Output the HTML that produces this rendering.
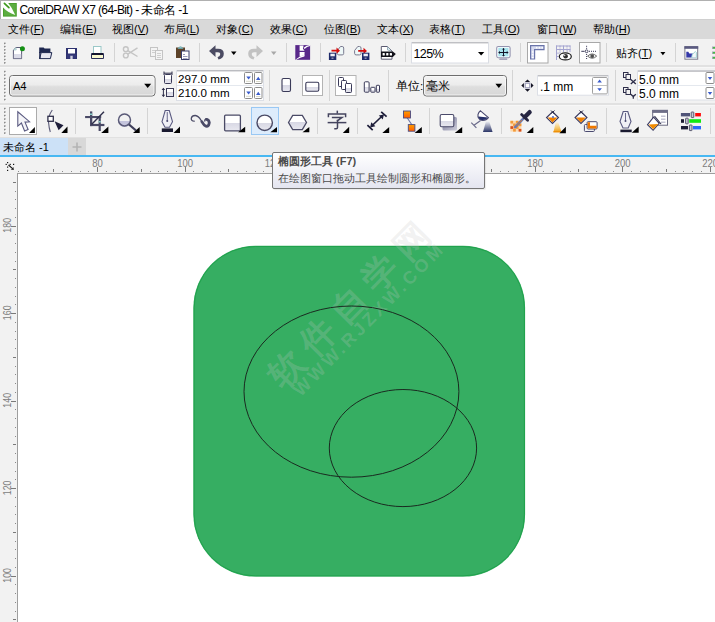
<!DOCTYPE html>
<html><head><meta charset="utf-8">
<style>
*{margin:0;padding:0;box-sizing:border-box}
html,body{width:715px;height:622px;overflow:hidden;background:#fff;font-family:"Liberation Sans",sans-serif;font-size:12px;color:#000}
.a{position:absolute}
.t{position:absolute;white-space:nowrap;font-size:11px;line-height:13px;color:#000}
.mi{top:23px}
</style></head><body>
<div class="a" style="left:0;top:0;width:715px;height:20px;background:#fff;border-top:1px solid #b0b0b0;border-left:1px solid #b0b0b0"></div>
<div class="a" style="left:0;top:19px;width:715px;height:20px;background:#d9d9d9;border-top:1px solid #d0d0d0"></div>
<div class="a" style="left:0;top:39px;width:715px;height:26px;background:#f2f2f2"></div>
<div class="a" style="left:0;top:65px;width:715px;height:2px;background:#e1e1e1"></div>
<div class="a" style="left:0;top:67px;width:715px;height:36px;background:#f2f2f2;border-top:1px solid #f7f7f7"></div>
<div class="a" style="left:0;top:103px;width:715px;height:2px;background:#e1e1e1"></div>
<div class="a" style="left:0;top:105px;width:715px;height:32px;background:#f2f2f2;border-top:1px solid #f7f7f7"></div>
<div class="a" style="left:0;top:137px;width:715px;height:18px;background:#ebebeb;border-top:1px solid #e1e1e1"></div>
<div class="a" style="left:0;top:138px;width:68px;height:17px;background:#cce1f7"></div>
<div class="a" style="left:68px;top:138px;width:18px;height:17px;background:#d8d8d8"></div>
<div class="a" style="left:0;top:155px;width:715px;height:2px;background:#48b8f2"></div>
<div class="a" style="left:0;top:157px;width:715px;height:16px;background:#f2f2f2"></div>
<div class="a" style="left:0;top:157px;width:17px;height:465px;background:#f2f2f2"></div>
<div class="a" style="left:17px;top:173px;width:698px;height:1px;background:#9e9e9e"></div>
<div class="a" style="left:17px;top:173px;width:1px;height:449px;background:#9e9e9e"></div>
<div class="a" style="left:18px;top:174px;width:697px;height:448px;background:#fff"></div>
<svg class="a" style="left:0;top:0" width="715" height="622" viewBox="0 0 715 622" font-family="Liberation Sans, sans-serif">
<rect x="193.4" y="245.8" width="331.7" height="330.8" rx="62" ry="62" fill="#36ae62"/>
<rect x="194.1" y="246.5" width="330.3" height="329.4" rx="61.3" ry="61.3" fill="none" stroke="#20a24c" stroke-width="1"/>
<g fill="#c8c8c8" fill-opacity="0.24" font-size="35" font-weight="bold">
<text x="0" y="0" transform="translate(286.0 369.0) rotate(-45.5)" text-anchor="middle" dominant-baseline="central">软</text>
<text x="0" y="0" transform="translate(317.2 337.0) rotate(-45.5)" text-anchor="middle" dominant-baseline="central">件</text>
<text x="0" y="0" transform="translate(348.5 305.0) rotate(-45.5)" text-anchor="middle" dominant-baseline="central">自</text>
<text x="0" y="0" transform="translate(379.8 273.0) rotate(-45.5)" text-anchor="middle" dominant-baseline="central">学</text>
<text x="0" y="0" transform="translate(411.0 241.0) rotate(-45.5)" text-anchor="middle" dominant-baseline="central">网</text>
</g>
<g fill="#c8c8c8" fill-opacity="0.24" font-size="18" font-weight="bold"><text x="0" y="0" transform="translate(367.9 320.4) rotate(-45.5)" text-anchor="middle" dominant-baseline="central" textLength="204" lengthAdjust="spacing">WWW.RJZXW.COM</text></g>
<ellipse cx="351.45" cy="391.6" rx="107.45" ry="85.6" fill="none" stroke="#1a2a20" stroke-width="1"/>
<ellipse cx="402.95" cy="448.05" rx="73.65" ry="58.55" fill="none" stroke="#1a2a20" stroke-width="1"/>
<line x1="18.5" y1="171" x2="18.5" y2="172" stroke="#8a8a8a" stroke-width="1"/>
<line x1="27.5" y1="171" x2="27.5" y2="172" stroke="#8a8a8a" stroke-width="1"/>
<line x1="36.5" y1="171" x2="36.5" y2="172" stroke="#8a8a8a" stroke-width="1"/>
<line x1="45.5" y1="171" x2="45.5" y2="172" stroke="#8a8a8a" stroke-width="1"/>
<line x1="53.5" y1="169" x2="53.5" y2="172" stroke="#7a7a7a" stroke-width="1"/>
<line x1="62.5" y1="171" x2="62.5" y2="172" stroke="#8a8a8a" stroke-width="1"/>
<line x1="71.5" y1="171" x2="71.5" y2="172" stroke="#8a8a8a" stroke-width="1"/>
<line x1="80.5" y1="171" x2="80.5" y2="172" stroke="#8a8a8a" stroke-width="1"/>
<line x1="88.5" y1="171" x2="88.5" y2="172" stroke="#8a8a8a" stroke-width="1"/>
<line x1="97.5" y1="167" x2="97.5" y2="172" stroke="#7a7a7a" stroke-width="1"/>
<text x="0" y="0" font-size="9.5" fill="#7c7c7c" text-anchor="middle" transform="translate(97.6 166.6) scale(1 1.13)">80</text>
<line x1="106.5" y1="171" x2="106.5" y2="172" stroke="#8a8a8a" stroke-width="1"/>
<line x1="115.5" y1="171" x2="115.5" y2="172" stroke="#8a8a8a" stroke-width="1"/>
<line x1="123.5" y1="171" x2="123.5" y2="172" stroke="#8a8a8a" stroke-width="1"/>
<line x1="132.5" y1="171" x2="132.5" y2="172" stroke="#8a8a8a" stroke-width="1"/>
<line x1="141.5" y1="169" x2="141.5" y2="172" stroke="#7a7a7a" stroke-width="1"/>
<line x1="150.5" y1="171" x2="150.5" y2="172" stroke="#8a8a8a" stroke-width="1"/>
<line x1="158.5" y1="171" x2="158.5" y2="172" stroke="#8a8a8a" stroke-width="1"/>
<line x1="167.5" y1="171" x2="167.5" y2="172" stroke="#8a8a8a" stroke-width="1"/>
<line x1="176.5" y1="171" x2="176.5" y2="172" stroke="#8a8a8a" stroke-width="1"/>
<line x1="185.5" y1="167" x2="185.5" y2="172" stroke="#7a7a7a" stroke-width="1"/>
<text x="0" y="0" font-size="9.5" fill="#7c7c7c" text-anchor="middle" transform="translate(185.1 166.6) scale(1 1.13)">100</text>
<line x1="193.5" y1="171" x2="193.5" y2="172" stroke="#8a8a8a" stroke-width="1"/>
<line x1="202.5" y1="171" x2="202.5" y2="172" stroke="#8a8a8a" stroke-width="1"/>
<line x1="211.5" y1="171" x2="211.5" y2="172" stroke="#8a8a8a" stroke-width="1"/>
<line x1="220.5" y1="171" x2="220.5" y2="172" stroke="#8a8a8a" stroke-width="1"/>
<line x1="228.5" y1="169" x2="228.5" y2="172" stroke="#7a7a7a" stroke-width="1"/>
<line x1="237.5" y1="171" x2="237.5" y2="172" stroke="#8a8a8a" stroke-width="1"/>
<line x1="246.5" y1="171" x2="246.5" y2="172" stroke="#8a8a8a" stroke-width="1"/>
<line x1="255.5" y1="171" x2="255.5" y2="172" stroke="#8a8a8a" stroke-width="1"/>
<line x1="263.5" y1="171" x2="263.5" y2="172" stroke="#8a8a8a" stroke-width="1"/>
<line x1="272.5" y1="167" x2="272.5" y2="172" stroke="#7a7a7a" stroke-width="1"/>
<text x="0" y="0" font-size="9.5" fill="#7c7c7c" text-anchor="middle" transform="translate(272.6 166.6) scale(1 1.13)">120</text>
<line x1="281.5" y1="171" x2="281.5" y2="172" stroke="#8a8a8a" stroke-width="1"/>
<line x1="290.5" y1="171" x2="290.5" y2="172" stroke="#8a8a8a" stroke-width="1"/>
<line x1="298.5" y1="171" x2="298.5" y2="172" stroke="#8a8a8a" stroke-width="1"/>
<line x1="307.5" y1="171" x2="307.5" y2="172" stroke="#8a8a8a" stroke-width="1"/>
<line x1="316.5" y1="169" x2="316.5" y2="172" stroke="#7a7a7a" stroke-width="1"/>
<line x1="325.5" y1="171" x2="325.5" y2="172" stroke="#8a8a8a" stroke-width="1"/>
<line x1="333.5" y1="171" x2="333.5" y2="172" stroke="#8a8a8a" stroke-width="1"/>
<line x1="342.5" y1="171" x2="342.5" y2="172" stroke="#8a8a8a" stroke-width="1"/>
<line x1="351.5" y1="171" x2="351.5" y2="172" stroke="#8a8a8a" stroke-width="1"/>
<line x1="360.5" y1="167" x2="360.5" y2="172" stroke="#7a7a7a" stroke-width="1"/>
<text x="0" y="0" font-size="9.5" fill="#7c7c7c" text-anchor="middle" transform="translate(360.2 166.6) scale(1 1.13)">140</text>
<line x1="368.5" y1="171" x2="368.5" y2="172" stroke="#8a8a8a" stroke-width="1"/>
<line x1="377.5" y1="171" x2="377.5" y2="172" stroke="#8a8a8a" stroke-width="1"/>
<line x1="386.5" y1="171" x2="386.5" y2="172" stroke="#8a8a8a" stroke-width="1"/>
<line x1="395.5" y1="171" x2="395.5" y2="172" stroke="#8a8a8a" stroke-width="1"/>
<line x1="403.5" y1="169" x2="403.5" y2="172" stroke="#7a7a7a" stroke-width="1"/>
<line x1="412.5" y1="171" x2="412.5" y2="172" stroke="#8a8a8a" stroke-width="1"/>
<line x1="421.5" y1="171" x2="421.5" y2="172" stroke="#8a8a8a" stroke-width="1"/>
<line x1="430.5" y1="171" x2="430.5" y2="172" stroke="#8a8a8a" stroke-width="1"/>
<line x1="438.5" y1="171" x2="438.5" y2="172" stroke="#8a8a8a" stroke-width="1"/>
<line x1="447.5" y1="167" x2="447.5" y2="172" stroke="#7a7a7a" stroke-width="1"/>
<text x="0" y="0" font-size="9.5" fill="#7c7c7c" text-anchor="middle" transform="translate(447.7 166.6) scale(1 1.13)">160</text>
<line x1="456.5" y1="171" x2="456.5" y2="172" stroke="#8a8a8a" stroke-width="1"/>
<line x1="465.5" y1="171" x2="465.5" y2="172" stroke="#8a8a8a" stroke-width="1"/>
<line x1="473.5" y1="171" x2="473.5" y2="172" stroke="#8a8a8a" stroke-width="1"/>
<line x1="482.5" y1="171" x2="482.5" y2="172" stroke="#8a8a8a" stroke-width="1"/>
<line x1="491.5" y1="169" x2="491.5" y2="172" stroke="#7a7a7a" stroke-width="1"/>
<line x1="500.5" y1="171" x2="500.5" y2="172" stroke="#8a8a8a" stroke-width="1"/>
<line x1="508.5" y1="171" x2="508.5" y2="172" stroke="#8a8a8a" stroke-width="1"/>
<line x1="517.5" y1="171" x2="517.5" y2="172" stroke="#8a8a8a" stroke-width="1"/>
<line x1="526.5" y1="171" x2="526.5" y2="172" stroke="#8a8a8a" stroke-width="1"/>
<line x1="535.5" y1="167" x2="535.5" y2="172" stroke="#7a7a7a" stroke-width="1"/>
<text x="0" y="0" font-size="9.5" fill="#7c7c7c" text-anchor="middle" transform="translate(535.2 166.6) scale(1 1.13)">180</text>
<line x1="543.5" y1="171" x2="543.5" y2="172" stroke="#8a8a8a" stroke-width="1"/>
<line x1="552.5" y1="171" x2="552.5" y2="172" stroke="#8a8a8a" stroke-width="1"/>
<line x1="561.5" y1="171" x2="561.5" y2="172" stroke="#8a8a8a" stroke-width="1"/>
<line x1="570.5" y1="171" x2="570.5" y2="172" stroke="#8a8a8a" stroke-width="1"/>
<line x1="578.5" y1="169" x2="578.5" y2="172" stroke="#7a7a7a" stroke-width="1"/>
<line x1="587.5" y1="171" x2="587.5" y2="172" stroke="#8a8a8a" stroke-width="1"/>
<line x1="596.5" y1="171" x2="596.5" y2="172" stroke="#8a8a8a" stroke-width="1"/>
<line x1="605.5" y1="171" x2="605.5" y2="172" stroke="#8a8a8a" stroke-width="1"/>
<line x1="613.5" y1="171" x2="613.5" y2="172" stroke="#8a8a8a" stroke-width="1"/>
<line x1="622.5" y1="167" x2="622.5" y2="172" stroke="#7a7a7a" stroke-width="1"/>
<text x="0" y="0" font-size="9.5" fill="#7c7c7c" text-anchor="middle" transform="translate(622.7 166.6) scale(1 1.13)">200</text>
<line x1="631.5" y1="171" x2="631.5" y2="172" stroke="#8a8a8a" stroke-width="1"/>
<line x1="640.5" y1="171" x2="640.5" y2="172" stroke="#8a8a8a" stroke-width="1"/>
<line x1="648.5" y1="171" x2="648.5" y2="172" stroke="#8a8a8a" stroke-width="1"/>
<line x1="657.5" y1="171" x2="657.5" y2="172" stroke="#8a8a8a" stroke-width="1"/>
<line x1="666.5" y1="169" x2="666.5" y2="172" stroke="#7a7a7a" stroke-width="1"/>
<line x1="675.5" y1="171" x2="675.5" y2="172" stroke="#8a8a8a" stroke-width="1"/>
<line x1="683.5" y1="171" x2="683.5" y2="172" stroke="#8a8a8a" stroke-width="1"/>
<line x1="692.5" y1="171" x2="692.5" y2="172" stroke="#8a8a8a" stroke-width="1"/>
<line x1="701.5" y1="171" x2="701.5" y2="172" stroke="#8a8a8a" stroke-width="1"/>
<line x1="710.5" y1="167" x2="710.5" y2="172" stroke="#7a7a7a" stroke-width="1"/>
<text x="0" y="0" font-size="9.5" fill="#7c7c7c" text-anchor="middle" transform="translate(710.2 166.6) scale(1 1.13)">220</text><line x1="13" y1="619.5" x2="16" y2="619.5" stroke="#7a7a7a" stroke-width="1"/>
<line x1="15" y1="611.5" x2="16" y2="611.5" stroke="#8a8a8a" stroke-width="1"/>
<line x1="15" y1="602.5" x2="16" y2="602.5" stroke="#8a8a8a" stroke-width="1"/>
<line x1="15" y1="593.5" x2="16" y2="593.5" stroke="#8a8a8a" stroke-width="1"/>
<line x1="15" y1="584.5" x2="16" y2="584.5" stroke="#8a8a8a" stroke-width="1"/>
<line x1="11" y1="576.5" x2="16" y2="576.5" stroke="#7a7a7a" stroke-width="1"/>
<text x="0" y="0" font-size="8.8" fill="#7c7c7c" text-anchor="middle" transform="translate(11.1 575.4) rotate(-90) scale(1 1.2)">100</text>
<line x1="15" y1="567.5" x2="16" y2="567.5" stroke="#8a8a8a" stroke-width="1"/>
<line x1="15" y1="558.5" x2="16" y2="558.5" stroke="#8a8a8a" stroke-width="1"/>
<line x1="15" y1="549.5" x2="16" y2="549.5" stroke="#8a8a8a" stroke-width="1"/>
<line x1="15" y1="541.5" x2="16" y2="541.5" stroke="#8a8a8a" stroke-width="1"/>
<line x1="13" y1="532.5" x2="16" y2="532.5" stroke="#7a7a7a" stroke-width="1"/>
<line x1="15" y1="523.5" x2="16" y2="523.5" stroke="#8a8a8a" stroke-width="1"/>
<line x1="15" y1="514.5" x2="16" y2="514.5" stroke="#8a8a8a" stroke-width="1"/>
<line x1="15" y1="506.5" x2="16" y2="506.5" stroke="#8a8a8a" stroke-width="1"/>
<line x1="15" y1="497.5" x2="16" y2="497.5" stroke="#8a8a8a" stroke-width="1"/>
<line x1="11" y1="488.5" x2="16" y2="488.5" stroke="#7a7a7a" stroke-width="1"/>
<text x="0" y="0" font-size="8.8" fill="#7c7c7c" text-anchor="middle" transform="translate(11.1 487.9) rotate(-90) scale(1 1.2)">120</text>
<line x1="15" y1="479.5" x2="16" y2="479.5" stroke="#8a8a8a" stroke-width="1"/>
<line x1="15" y1="471.5" x2="16" y2="471.5" stroke="#8a8a8a" stroke-width="1"/>
<line x1="15" y1="462.5" x2="16" y2="462.5" stroke="#8a8a8a" stroke-width="1"/>
<line x1="15" y1="453.5" x2="16" y2="453.5" stroke="#8a8a8a" stroke-width="1"/>
<line x1="13" y1="444.5" x2="16" y2="444.5" stroke="#7a7a7a" stroke-width="1"/>
<line x1="15" y1="436.5" x2="16" y2="436.5" stroke="#8a8a8a" stroke-width="1"/>
<line x1="15" y1="427.5" x2="16" y2="427.5" stroke="#8a8a8a" stroke-width="1"/>
<line x1="15" y1="418.5" x2="16" y2="418.5" stroke="#8a8a8a" stroke-width="1"/>
<line x1="15" y1="409.5" x2="16" y2="409.5" stroke="#8a8a8a" stroke-width="1"/>
<line x1="11" y1="401.5" x2="16" y2="401.5" stroke="#7a7a7a" stroke-width="1"/>
<text x="0" y="0" font-size="8.8" fill="#7c7c7c" text-anchor="middle" transform="translate(11.1 400.3) rotate(-90) scale(1 1.2)">140</text>
<line x1="15" y1="392.5" x2="16" y2="392.5" stroke="#8a8a8a" stroke-width="1"/>
<line x1="15" y1="383.5" x2="16" y2="383.5" stroke="#8a8a8a" stroke-width="1"/>
<line x1="15" y1="374.5" x2="16" y2="374.5" stroke="#8a8a8a" stroke-width="1"/>
<line x1="15" y1="366.5" x2="16" y2="366.5" stroke="#8a8a8a" stroke-width="1"/>
<line x1="13" y1="357.5" x2="16" y2="357.5" stroke="#7a7a7a" stroke-width="1"/>
<line x1="15" y1="348.5" x2="16" y2="348.5" stroke="#8a8a8a" stroke-width="1"/>
<line x1="15" y1="339.5" x2="16" y2="339.5" stroke="#8a8a8a" stroke-width="1"/>
<line x1="15" y1="331.5" x2="16" y2="331.5" stroke="#8a8a8a" stroke-width="1"/>
<line x1="15" y1="322.5" x2="16" y2="322.5" stroke="#8a8a8a" stroke-width="1"/>
<line x1="11" y1="313.5" x2="16" y2="313.5" stroke="#7a7a7a" stroke-width="1"/>
<text x="0" y="0" font-size="8.8" fill="#7c7c7c" text-anchor="middle" transform="translate(11.1 312.8) rotate(-90) scale(1 1.2)">160</text>
<line x1="15" y1="304.5" x2="16" y2="304.5" stroke="#8a8a8a" stroke-width="1"/>
<line x1="15" y1="296.5" x2="16" y2="296.5" stroke="#8a8a8a" stroke-width="1"/>
<line x1="15" y1="287.5" x2="16" y2="287.5" stroke="#8a8a8a" stroke-width="1"/>
<line x1="15" y1="278.5" x2="16" y2="278.5" stroke="#8a8a8a" stroke-width="1"/>
<line x1="13" y1="269.5" x2="16" y2="269.5" stroke="#7a7a7a" stroke-width="1"/>
<line x1="15" y1="261.5" x2="16" y2="261.5" stroke="#8a8a8a" stroke-width="1"/>
<line x1="15" y1="252.5" x2="16" y2="252.5" stroke="#8a8a8a" stroke-width="1"/>
<line x1="15" y1="243.5" x2="16" y2="243.5" stroke="#8a8a8a" stroke-width="1"/>
<line x1="15" y1="234.5" x2="16" y2="234.5" stroke="#8a8a8a" stroke-width="1"/>
<line x1="11" y1="226.5" x2="16" y2="226.5" stroke="#7a7a7a" stroke-width="1"/>
<text x="0" y="0" font-size="8.8" fill="#7c7c7c" text-anchor="middle" transform="translate(11.1 225.3) rotate(-90) scale(1 1.2)">180</text>
<line x1="15" y1="217.5" x2="16" y2="217.5" stroke="#8a8a8a" stroke-width="1"/>
<line x1="15" y1="208.5" x2="16" y2="208.5" stroke="#8a8a8a" stroke-width="1"/>
<line x1="15" y1="199.5" x2="16" y2="199.5" stroke="#8a8a8a" stroke-width="1"/>
<line x1="15" y1="191.5" x2="16" y2="191.5" stroke="#8a8a8a" stroke-width="1"/>
<line x1="13" y1="182.5" x2="16" y2="182.5" stroke="#7a7a7a" stroke-width="1"/><!-- title logo -->
<rect x="3" y="3" width="13.8" height="13.6" fill="#4aa02c"/>
<rect x="4" y="4" width="11.8" height="11.6" fill="#5cad40"/>
<path d="M2.8 2.8 H8 Q12 7.5 15.2 15 Q7.5 12.5 2.8 7.3 Z" fill="#ffffff"/>
<path d="M4.4 3.4 L8.9 7.6" stroke="#3e9a1e" stroke-width="1.7" stroke-linecap="round"/>
<!-- grips -->
<rect x="4" y="42.60" width="1.6" height="1.6" fill="#8a8a8a"/><rect x="5.3" y="43.90" width="1" height="1" fill="#ffffff"/>
<rect x="4" y="45.85" width="1.6" height="1.6" fill="#8a8a8a"/><rect x="5.3" y="47.15" width="1" height="1" fill="#ffffff"/>
<rect x="4" y="49.10" width="1.6" height="1.6" fill="#8a8a8a"/><rect x="5.3" y="50.40" width="1" height="1" fill="#ffffff"/>
<rect x="4" y="52.35" width="1.6" height="1.6" fill="#8a8a8a"/><rect x="5.3" y="53.65" width="1" height="1" fill="#ffffff"/>
<rect x="4" y="55.60" width="1.6" height="1.6" fill="#8a8a8a"/><rect x="5.3" y="56.90" width="1" height="1" fill="#ffffff"/>
<rect x="4" y="58.85" width="1.6" height="1.6" fill="#8a8a8a"/><rect x="5.3" y="60.15" width="1" height="1" fill="#ffffff"/>
<rect x="4" y="62.10" width="1.6" height="1.6" fill="#8a8a8a"/><rect x="5.3" y="63.40" width="1" height="1" fill="#ffffff"/>
<rect x="4" y="70.80" width="1.6" height="1.6" fill="#8a8a8a"/><rect x="5.3" y="72.10" width="1" height="1" fill="#ffffff"/>
<rect x="4" y="74.30" width="1.6" height="1.6" fill="#8a8a8a"/><rect x="5.3" y="75.60" width="1" height="1" fill="#ffffff"/>
<rect x="4" y="77.80" width="1.6" height="1.6" fill="#8a8a8a"/><rect x="5.3" y="79.10" width="1" height="1" fill="#ffffff"/>
<rect x="4" y="81.30" width="1.6" height="1.6" fill="#8a8a8a"/><rect x="5.3" y="82.60" width="1" height="1" fill="#ffffff"/>
<rect x="4" y="84.80" width="1.6" height="1.6" fill="#8a8a8a"/><rect x="5.3" y="86.10" width="1" height="1" fill="#ffffff"/>
<rect x="4" y="88.30" width="1.6" height="1.6" fill="#8a8a8a"/><rect x="5.3" y="89.60" width="1" height="1" fill="#ffffff"/>
<rect x="4" y="91.80" width="1.6" height="1.6" fill="#8a8a8a"/><rect x="5.3" y="93.10" width="1" height="1" fill="#ffffff"/>
<rect x="4" y="95.30" width="1.6" height="1.6" fill="#8a8a8a"/><rect x="5.3" y="96.60" width="1" height="1" fill="#ffffff"/>
<rect x="4" y="98.80" width="1.6" height="1.6" fill="#8a8a8a"/><rect x="5.3" y="100.10" width="1" height="1" fill="#ffffff"/>
<rect x="4" y="107.80" width="1.6" height="1.6" fill="#8a8a8a"/><rect x="5.3" y="109.10" width="1" height="1" fill="#ffffff"/>
<rect x="4" y="111.30" width="1.6" height="1.6" fill="#8a8a8a"/><rect x="5.3" y="112.60" width="1" height="1" fill="#ffffff"/>
<rect x="4" y="114.80" width="1.6" height="1.6" fill="#8a8a8a"/><rect x="5.3" y="116.10" width="1" height="1" fill="#ffffff"/>
<rect x="4" y="118.30" width="1.6" height="1.6" fill="#8a8a8a"/><rect x="5.3" y="119.60" width="1" height="1" fill="#ffffff"/>
<rect x="4" y="121.80" width="1.6" height="1.6" fill="#8a8a8a"/><rect x="5.3" y="123.10" width="1" height="1" fill="#ffffff"/>
<rect x="4" y="125.30" width="1.6" height="1.6" fill="#8a8a8a"/><rect x="5.3" y="126.60" width="1" height="1" fill="#ffffff"/>
<rect x="4" y="128.80" width="1.6" height="1.6" fill="#8a8a8a"/><rect x="5.3" y="130.10" width="1" height="1" fill="#ffffff"/>
<rect x="4" y="132.30" width="1.6" height="1.6" fill="#8a8a8a"/><rect x="5.3" y="133.60" width="1" height="1" fill="#ffffff"/>
<!-- separators tb1 -->
<g fill="#d4d4d4">
<rect x="114" y="43" width="1" height="19"/>
<rect x="199" y="43" width="1" height="19"/>
<rect x="286" y="43" width="1" height="19"/>
<rect x="320" y="43" width="1" height="19"/>
<rect x="405" y="43" width="1" height="19"/>
<rect x="520" y="43" width="1" height="19"/>
<rect x="606" y="43" width="1" height="19"/>
<rect x="675" y="43" width="1" height="19"/>
</g>
<!-- new -->
<path d="M16 47.5 H21.6 V58.6 H13.4 V50.1 Z" fill="#ffffff" stroke="#4a4a6a" stroke-width="0.9"/>
<rect x="13.9" y="54" width="7.3" height="4.2" fill="#dcdce8"/>
<path d="M13.6 50 L16 47.6 L16.2 50 Z" fill="#d8f0ee" stroke="#90b8b8" stroke-width="0.6"/>
<circle cx="22.4" cy="48.7" r="2.5" fill="#159015"/>
<!-- open -->
<path d="M39.2 47.6 H43.6 L44.6 48.6 H50.4 V53 H39.2 Z" fill="#1e2850"/>
<path d="M39.6 58.6 L41.2 52.6 H51.8 L50.4 58.6 Z" fill="#e6e6f0" stroke="#1e2850" stroke-width="1"/>
<rect x="39.2" y="52" width="1.4" height="7" fill="#1e2850"/>
<!-- save -->
<rect x="66" y="48" width="11" height="11" fill="#2e3270"/>
<rect x="68" y="49" width="7" height="4.5" fill="#ffffff"/>
<rect x="70" y="55.5" width="3" height="3" fill="#c8c8d8"/>
<rect x="67" y="54.5" width="9" height="4" fill="#3a3e80" opacity="0.6"/>
<rect x="70.5" y="56" width="2" height="3" fill="#d0d0e0"/>
<!-- print -->
<rect x="93.5" y="46.5" width="7.5" height="7.5" fill="#ffffff" stroke="#9ac8c8" stroke-width="1"/>
<path d="M91.5 53.5 H103.5 V58.5 H91.5 Z" fill="#f8f8d0" stroke="#2a2e58" stroke-width="1"/>
<rect x="92" y="53" width="11" height="2" fill="#151530"/>
<!-- scissors -->
<g fill="none" stroke="#c4c4c4" stroke-width="1.4">
<circle cx="125.8" cy="49.2" r="2.4"/>
<circle cx="125.8" cy="55.5" r="2.4"/>
<path d="M127.8 50.6 L137.5 56.5 M127.8 54.1 L137.5 47.8"/>
</g>
<!-- copy -->
<g fill="#f4f4f4" stroke="#c4c4c4" stroke-width="1">
<rect x="150.5" y="47.5" width="7" height="9"/>
<rect x="155.5" y="50.5" width="7" height="9"/>
</g>
<g fill="#cfcfcf"><rect x="157" y="53" width="4" height="1"/><rect x="157" y="55" width="4" height="1"/><rect x="157" y="57" width="4" height="1"/><rect x="152" y="50" width="3" height="1"/><rect x="152" y="52" width="3" height="1"/></g>
<!-- paste -->
<rect x="176" y="47.5" width="9" height="10.5" fill="#5c4228"/>
<path d="M178 48.5 Q180.5 45 183 48.5 Z" fill="#8ccfcf" stroke="#6aa0a8" stroke-width="0.8"/>
<rect x="181.5" y="51" width="7.5" height="8.5" fill="#ffffff" stroke="#3a3e6a" stroke-width="1"/>
<g fill="#9a9ab8"><rect x="183" y="54" width="2" height="1"/><rect x="183" y="56" width="4.5" height="1"/><rect x="183" y="58" width="4.5" height="0.8"/></g>
<!-- undo -->
<path d="M209 51 L215.5 45.2 V48.7 H218 Q223.8 48.7 223.8 53.8 Q223.8 58.5 218.5 59.5 L217.5 57.2 Q220.3 56.5 220.3 54 Q220.3 52.3 218 52.3 H215.5 V56.9 Z" fill="#4b4b62"/>
<path d="M231 51.5 H236.5 L233.75 55 Z" fill="#000000"/>
<!-- redo -->
<path d="M263 51 L256.5 45.2 V48.7 H254 Q248.2 48.7 248.2 53.8 Q248.2 58.5 253.5 59.5 L254.5 57.2 Q251.7 56.5 251.7 54 Q251.7 52.3 254 52.3 H256.5 V56.9 Z" fill="#c2c2c2"/>
<path d="M271 51.5 H276.5 L273.75 55 Z" fill="#a8a8a8"/>
<!-- purple -->
<rect x="295.3" y="45.1" width="14.8" height="14.7" fill="#58288a"/>
<g transform="translate(295.3 45.1)" fill="#ffffff">
<path d="M4.3 0.4 H8.3 L7.6 3.6 L9.3 5.6 H4.3 Z"/>
<path d="M8.4 2.6 Q11 0.2 14.8 0 V0.9 Q11.5 1.3 9.3 3.9 Z"/>
<path d="M4.3 7.0 H9.3 L9.1 10.2 L4.3 11.5 Z"/>
<path d="M0 14.7 Q4.5 10.8 9.3 9.6 L9.1 11.4 Q5 12.4 0.9 14.7 Z"/>
</g>
<!-- import -->
<path d="M340.5 46.5 H342.2 Q343.7 46.5 343.7 48 V53.4 Q343.7 54.9 342.2 54.9 H338.8 Q337.3 54.9 337.3 53.4 V50.5 Z" fill="#eef8f8" stroke="#7a7a90" stroke-width="1"/>
<path d="M331.5 49.8 H336.5 V47.6 L340 50.7 L336.5 53.8 V51.6 H331.5 Z" fill="#d40c0c"/>
<rect x="328.9" y="52.7" width="7.4" height="7.3" fill="#1e2a6a"/>
<rect x="330.4" y="53.7" width="4.4" height="2.6" fill="#eeeef6"/>
<rect x="331.5" y="57.5" width="2" height="1.5" fill="#8a8ab0"/>
<!-- export -->
<path d="M357.8 46.5 H359.5 Q361 46.5 361 48 V53.4 Q361 54.9 359.5 54.9 H356.1 Q354.6 54.9 354.6 53.4 V50.5 Z" fill="#eef8f8" stroke="#7a7a90" stroke-width="1"/>
<path d="M358.2 50 H363.5 V47.8 L367 50.9 L363.5 54 V51.8 H358.2 Z" fill="#d40c0c"/>
<rect x="362" y="52.7" width="7.4" height="7.3" fill="#1e2a6a"/>
<rect x="363.5" y="53.7" width="4.4" height="2.6" fill="#eeeef6"/>
<rect x="364.6" y="57.5" width="2" height="1.5" fill="#8a8ab0"/>
<!-- pdf -->
<path d="M381.3 46.5 H387.5 L392 51 V59.2 H381.3 Z" fill="#ffffff" stroke="#5a5a70" stroke-width="1"/>
<path d="M387.5 46.5 L387.5 50 L391.5 51" fill="#d8eef0" stroke="#8aa0b0" stroke-width="0.8"/>
<path d="M381 51.4 H392.8 L395.8 54.1 L392.8 56.9 H381 Z" fill="#101018"/>
<g fill="#ffffff"><rect x="382.6" y="52.9" width="2.2" height="2.6" rx="0.6"/><rect x="386.2" y="52.9" width="2.2" height="2.6" rx="0.6"/><rect x="389.8" y="52.9" width="2.2" height="2.6" rx="0.6"/></g>
<!-- zoom combo -->
<rect x="411.5" y="42.5" width="77" height="20.5" fill="#ffffff" stroke="#dadde4" stroke-width="1"/><rect x="412" y="42.2" width="76" height="1.2" fill="#b8b8bc"/>
<path d="M478 52 H484.3 L481.15 55.6 Z" fill="#000000"/>
<!-- full screen icon -->
<rect x="496.7" y="46.5" width="13.4" height="11.2" rx="1.6" fill="#ffffff" stroke="#9494b0" stroke-width="1.1"/>
<rect x="498.3" y="47.8" width="10.2" height="8.6" fill="#a8e4ee"/>
<rect x="499.3" y="58.4" width="8" height="1.4" rx="0.6" fill="#8a8aa6"/>
<path d="M503.5 48.6 V55.8 M499 52.5 H507.8" stroke="#141428" stroke-width="1"/>
<path d="M503.5 47.9 L502 49.6 H505 Z M503.5 56.6 L502 54.9 H505 Z M498.2 52.5 L500 51 V54 Z M508.6 52.5 L506.8 51 V54 Z" fill="#141428"/>
<!-- rulers button -->
<rect x="527.5" y="42.5" width="20.5" height="20.5" fill="#ffffff" stroke="#a8a8a8" stroke-width="1"/>
<path d="M530.6 45.6 H544 V49.6 H534.6 V59 H530.6 Z" fill="#d8dcf0" stroke="#6a74aa" stroke-width="1.2"/>
<g fill="#ffffff"><rect x="536" y="46.9" width="1.3" height="1.6"/><rect x="538.8" y="46.9" width="1.3" height="1.6"/><rect x="541.6" y="46.9" width="1.3" height="1.6"/><rect x="531.9" y="51.3" width="1.6" height="1.3"/><rect x="531.9" y="54.1" width="1.6" height="1.3"/><rect x="531.9" y="56.9" width="1.6" height="1.3"/></g>
<!-- grid eye -->
<g stroke="#a4a4d0" stroke-width="1">
<path d="M556.5 45.5 V60 M560 45.5 V53 M563.5 45.5 V52 M567 45.5 V52 M570 45.5 V52"/>
<path d="M556 46 H570.5 M556 49.5 H570.5 M556 53 H559.5 M556 56.5 H558.5"/>
</g>
<g fill="#f2f2f2"><rect x="557" y="47" width="2.5" height="2"/><rect x="560.5" y="47" width="2.5" height="2"/><rect x="564" y="47" width="2.5" height="2"/><rect x="567.5" y="47" width="2" height="2"/><rect x="557" y="50.5" width="2.5" height="2"/><rect x="560.5" y="50.5" width="2.5" height="1.5"/><rect x="564" y="50.5" width="2.5" height="1.5"/></g>
<ellipse cx="565.3" cy="56.4" rx="6" ry="3.5" fill="#ffffff" stroke="#1e1e1e" stroke-width="1.2"/>
<circle cx="565.6" cy="56.3" r="2.3" fill="#303030"/>
<circle cx="564.7" cy="55.5" r="0.7" fill="#e0e0e0"/>
<!-- guides button -->
<rect x="579.5" y="42.5" width="20.5" height="20.5" fill="#ffffff" stroke="#a8a8a8" stroke-width="1"/>
<g fill="#3a3a58">
<rect x="586.1" y="45.8" width="1" height="1"/><rect x="586.1" y="47.8" width="1" height="1"/><rect x="586.1" y="54" width="1" height="1"/><rect x="586.1" y="56" width="1" height="1"/><rect x="586.1" y="58" width="1" height="1"/>
<rect x="581.3" y="50.8" width="3.2" height="1"/><rect x="589" y="50.8" width="1" height="1"/><rect x="591" y="50.8" width="1" height="1"/><rect x="593" y="50.8" width="1" height="1"/><rect x="595" y="50.8" width="1" height="1"/>
</g>
<circle cx="586.6" cy="51.3" r="1.4" fill="none" stroke="#3a3a58" stroke-width="0.9"/>
<path d="M587.6 56.1 Q592.2 51.8 596.7 56.1 Q592.2 60.4 587.6 56.1 Z" fill="#f0f0f0" stroke="#6a6a6a" stroke-width="1"/>
<circle cx="592.2" cy="56.1" r="1.9" fill="#505050"/>
<!-- snap arrow -->
<path d="M660.4 52 H665.4 L662.9 55.2 Z" fill="#000000"/>
<!-- options icon -->
<rect x="684.9" y="46.7" width="12.8" height="12.5" fill="#ffffff" stroke="#7a7a8a" stroke-width="1"/>
<rect x="684.4" y="46.2" width="13.8" height="2.6" fill="#5a5a80"/>
<path d="M686.3 57.8 V51.8 H688.3 L689.3 53.6 H692.8 V57.8 Z" fill="#3438a8"/>
<path d="M691.6 57.8 L692.2 54.5 L695.4 51.5 L696.4 52.5 V57.8 Z" fill="#f4f8f8" stroke="#8ccccc" stroke-width="0.8"/>
<rect x="686" y="57.6" width="10.8" height="1" fill="#d0d0dc"/>
<!-- green dots right edge -->
<g fill="#a8a8b8"><rect x="712" y="46.5" width="3" height="2.5"/><rect x="712" y="51.5" width="3" height="2.5"/><rect x="712" y="56.5" width="3" height="2.5"/></g>
<g fill="#40c040"><rect x="713" y="47" width="2" height="1.5"/><rect x="713" y="52" width="2" height="1.5"/><rect x="713" y="57" width="2" height="1.5"/></g>
<!-- ============ TB2 ============ -->
<defs>
<linearGradient id="cmb" x1="0" y1="0" x2="0" y2="1"><stop offset="0" stop-color="#f4f4f4"/><stop offset="0.45" stop-color="#ececec"/><stop offset="0.55" stop-color="#dedede"/><stop offset="1" stop-color="#d6d6d6"/></linearGradient>
<linearGradient id="pg" x1="0" y1="0" x2="0" y2="1"><stop offset="0" stop-color="#ffffff"/><stop offset="0.5" stop-color="#ffffff"/><stop offset="0.5" stop-color="#d8d8e4"/><stop offset="1" stop-color="#e8e8f0"/></linearGradient>
<linearGradient id="tip" x1="0" y1="0" x2="0" y2="1"><stop offset="0" stop-color="#ffffff"/><stop offset="1" stop-color="#e3e4ef"/></linearGradient>
</defs>
<g fill="#d4d4d4">
<rect x="269" y="70" width="1" height="31"/>
<rect x="329" y="70" width="1" height="31"/>
<rect x="388" y="70" width="1" height="31"/>
<rect x="512" y="70" width="1" height="31"/>
<rect x="615" y="70" width="1" height="31"/>
</g>
<!-- A4 combo -->
<rect x="9.5" y="75.5" width="145.5" height="20.5" rx="3" fill="url(#cmb)" stroke="#6e6e6e" stroke-width="1"/><rect x="10.5" y="76.5" width="143.5" height="18.5" rx="2" fill="none" stroke="#fafafa" stroke-width="1" opacity="0.8"/>
<path d="M144.2 83.7 H151.2 L147.7 88 Z" fill="#000"/>
<!-- width/height icons -->
<path d="M164 73.2 H172 M164 71.5 V75 M172 71.5 V75" stroke="#2e2e4a" stroke-width="1"/>
<rect x="164.5" y="74.5" width="7" height="9" rx="1" fill="url(#pg)" stroke="#3a3a58" stroke-width="1"/>
<path d="M163.4 88.5 V96.5" stroke="#2e2e4a" stroke-width="1"/>
<path d="M163.4 87.8 L161.6 90 H165.2 Z M163.4 97 L161.6 94.8 H165.2 Z" fill="#2e2e4a"/>
<rect x="166.5" y="88.5" width="7" height="8" fill="url(#pg)" stroke="#3a3a58" stroke-width="1"/>
<!-- size input -->
<rect x="176.5" y="70.5" width="87" height="30" fill="#ffffff" stroke="#dcdfe6" stroke-width="1"/><rect x="177" y="70.2" width="86" height="1.2" fill="#b4b4b8"/>
<rect x="177" y="85" width="86" height="1" fill="#e4e8ee"/>
<g fill="#ffffff" stroke="#8c8c8c" stroke-width="1">
<rect x="244.5" y="72.5" width="8" height="11" rx="1"/>
<rect x="254.5" y="72.5" width="7.5" height="11" rx="1"/>
<rect x="244.5" y="87.5" width="8" height="11" rx="1"/>
<rect x="254.5" y="87.5" width="7.5" height="11" rx="1"/>
</g>
<g fill="#3a5ccc">
<path d="M246.3 76.5 H250.9 L248.6 79.6 Z"/><path d="M256 80 H260.5 L258.25 76.8 Z"/>
<path d="M246.3 91.5 H250.9 L248.6 94.6 Z"/><path d="M256 95 H260.5 L258.25 91.8 Z"/>
</g>
<g fill="#d8d8c8"><rect x="246" y="80.8" width="5" height="1"/><rect x="256" y="81" width="4.5" height="1"/><rect x="246" y="95.8" width="5" height="1"/><rect x="256" y="96" width="4.5" height="1"/></g>
<!-- portrait -->
<rect x="282" y="78.5" width="8.5" height="13" rx="1.5" fill="url(#pg)" stroke="#3a3a58" stroke-width="1.1"/>
<!-- landscape btn -->
<rect x="302.5" y="75.5" width="20" height="20" fill="#ffffff" stroke="#b4b4b4" stroke-width="1"/>
<rect x="305.8" y="82.2" width="13" height="9" rx="1.5" fill="url(#pg)" stroke="#3a3a58" stroke-width="1.1"/>
<!-- pages btn -->
<rect x="335.5" y="75.5" width="20.5" height="20" fill="#ffffff" stroke="#b4b4b4" stroke-width="1"/>
<rect x="338.5" y="77.5" width="5" height="9" rx="0.8" fill="#ffffff" stroke="#3a3a58" stroke-width="1"/>
<rect x="341.5" y="80.5" width="5" height="9" rx="0.8" fill="#ffffff" stroke="#3a3a58" stroke-width="1"/>
<rect x="345.5" y="83.5" width="6" height="9" rx="0.8" fill="url(#pg)" stroke="#3a3a58" stroke-width="1"/>
<!-- layout icon -->
<rect x="364.3" y="81.8" width="4.8" height="10.4" rx="1" fill="url(#pg)" stroke="#3a3a58" stroke-width="1"/>
<rect x="370.8" y="87.3" width="4.2" height="4.9" rx="0.6" fill="url(#pg)" stroke="#3a3a58" stroke-width="1"/>
<rect x="376.3" y="85.3" width="3.2" height="6.9" rx="0.6" fill="url(#pg)" stroke="#3a3a58" stroke-width="1"/>
<!-- units combo -->
<rect x="423.5" y="75.5" width="83" height="20.5" rx="3" fill="url(#cmb)" stroke="#6e6e6e" stroke-width="1"/><rect x="424.5" y="76.5" width="81" height="18.5" rx="2" fill="none" stroke="#fafafa" stroke-width="1" opacity="0.8"/>
<path d="M495.4 83.7 H502.2 L498.8 88 Z" fill="#000"/>
<!-- nudge icon -->
<path d="M527.5 79.4 L524.9 82 H530.1 Z M527.5 91.7 L524.9 89.1 H530.1 Z M521.3 85.5 L523.9 82.9 V88.1 Z M533.6 85.5 L531 82.9 V88.1 Z" fill="#151525"/>
<rect x="525.2" y="83.2" width="4.6" height="4.6" fill="#ffffff" stroke="#9c9cb8" stroke-width="1.2"/>
<!-- nudge input -->
<rect x="537.5" y="75.5" width="71" height="19.7" fill="#ffffff" stroke="#dcdfe6" stroke-width="1"/><rect x="538" y="75.2" width="70" height="1.2" fill="#b8b8bc"/>
<rect x="592.5" y="77.5" width="14.8" height="16.4" rx="1" fill="#ffffff" stroke="#a0a0a0" stroke-width="1"/>
<rect x="593" y="85" width="14" height="1" fill="#c0c0c0"/>
<path d="M597.3 82.4 H601.9 L599.6 79.6 Z M597.3 88.3 H601.9 L599.6 91.1 Z" fill="#3a5ccc"/>
<!-- dup distance icons -->
<g fill="none" stroke="#2e2e4a" stroke-width="1">
<rect x="623.5" y="72.5" width="4.5" height="5"/><rect x="626" y="74.5" width="4.5" height="5" fill="#f2f2f2"/>
<rect x="623.5" y="87.5" width="4.5" height="5"/><rect x="626" y="89.5" width="4.5" height="5" fill="#f2f2f2"/>
<path d="M630.8 79.5 L635.8 84 M635.8 79.5 L630.8 84" stroke-width="1.3"/>
<path d="M630.8 94.2 L633.3 96.5 L635.8 94.2 M633.3 96.5 V98.8" stroke-width="1.3"/>
</g>
<!-- dup input -->
<rect x="637.5" y="70.8" width="80" height="29.2" fill="#ffffff" stroke="#dcdfe6" stroke-width="1"/><rect x="638" y="70.5" width="77" height="1.2" fill="#b4b4b8"/>
<rect x="638" y="85" width="77" height="1" fill="#e4e8ee"/>
<g fill="#ffffff" stroke="#8c8c8c" stroke-width="1"><rect x="706" y="72.5" width="8" height="11" rx="1"/><rect x="706" y="87.5" width="8" height="11" rx="1"/></g>
<path d="M707.8 77 H712.2 L710 80 Z M707.8 92 H712.2 L710 95 Z" fill="#3a5ccc"/>
<!-- ============ TB3 ============ -->
<defs>
<linearGradient id="org" x1="0" y1="0" x2="0" y2="1"><stop offset="0" stop-color="#ffa000"/><stop offset="1" stop-color="#ff5a00"/></linearGradient>
<linearGradient id="trg" x1="0" y1="0" x2="0" y2="1"><stop offset="0" stop-color="#f2f2f6"/><stop offset="1" stop-color="#2a3466"/></linearGradient>
<linearGradient id="ofg" x1="0" y1="0" x2="0" y2="1"><stop offset="0" stop-color="#fbf2dc"/><stop offset="0.6" stop-color="#f4c464"/><stop offset="1" stop-color="#ee9a10"/></linearGradient>
<linearGradient id="shd" x1="0" y1="0" x2="1" y2="1"><stop offset="0" stop-color="#5a5a80"/><stop offset="1" stop-color="#c8c8d8"/></linearGradient>
</defs>
<g fill="#d4d4d4">
<rect x="75" y="108" width="1" height="26"/>
<rect x="147" y="108" width="1" height="26"/>
<rect x="317" y="108" width="1" height="26"/>
<rect x="357" y="108" width="1" height="26"/>
<rect x="429" y="108" width="1" height="26"/>
<rect x="501" y="108" width="1" height="26"/>
<rect x="606" y="108" width="1" height="26"/>
<rect x="710" y="108" width="1" height="26"/>
</g>
<!-- pick -->
<rect x="9.5" y="107.5" width="27" height="27" fill="#ffffff" stroke="#ababab" stroke-width="1"/>
<path d="M17.8 111.8 V126.1 L21.4 123 L24.6 131 L28.1 129.5 L25 122.1 L29.5 121.7 Z" fill="#f4f4f8" stroke="#5a5a80" stroke-width="1.1" stroke-linejoin="miter"/>
<path d="M34.9 127 V132.9 H29 Z" fill="#000"/>
<!-- shape tool -->
<path d="M52.3 110 Q48 116 48.5 122 Q49 128 50.3 132" fill="none" stroke="#5a5a78" stroke-width="1.1"/>
<rect x="47.9" y="116.3" width="5.4" height="5" fill="#ffffff" stroke="#2e2e4a" stroke-width="1.3"/>
<path d="M54.6 121.2 L63.5 125.2 L58.6 130.2 Z" fill="#1e1e3a"/>
<path d="M67.5 126.6 V132.9 H61.3 Z" fill="#000"/>
<!-- crop -->
<g fill="#4a4a66">
<rect x="90" y="111.4" width="2.3" height="14.7"/>
<rect x="85.1" y="116" width="16.1" height="2.1"/>
<rect x="98.6" y="116" width="2.2" height="15"/>
<rect x="90" y="123.9" width="14.4" height="2.2"/>
</g>
<path d="M91.5 124.5 L104 111.8" stroke="#2e2e4a" stroke-width="1.4"/>
<rect x="90" y="113.5" width="2.3" height="1.5" fill="#8acfc8"/>
<rect x="98.6" y="121" width="2.2" height="1.5" fill="#8acfc8"/>
<path d="M108.4 126.6 V132.9 H101.2 Z" fill="#000"/>
<!-- zoom -->
<path d="M118.5 121 A6 6 0 0 0 130.5 121 Z" fill="#c4c4dc"/>
<circle cx="124.5" cy="119.9" r="6" fill="none" stroke="#5a5a78" stroke-width="1.5"/>
<path d="M129 124.5 L136 130.5" stroke="#3e3e5a" stroke-width="2.3"/>
<path d="M139.7 127 V132.9 H133 Z" fill="#000"/>
<!-- freehand pen -->
<path d="M165.2 110.5 H169.3 L172.5 121.7 L169.5 127.3 H165 L162 121.7 Z" fill="#f0f0f6" stroke="#5a5a80" stroke-width="1.1"/>
<path d="M167.25 112 V121" stroke="#5a5a80" stroke-width="0.9"/>
<circle cx="167.25" cy="121" r="1" fill="#4a4a70"/>
<rect x="161.8" y="128.4" width="11.2" height="3.6" fill="#1a1a30"/>
<path d="M180 126.6 V132.9 H173.5 Z" fill="#000"/>
<!-- artistic media -->
<path d="M194.2 121.2 Q191 121 191.3 118.2 Q192 115.4 195.3 115.5 Q198.5 115.8 201 120.3 Q203.5 125 206 126.3 Q209.4 127 209.6 122.6 Q209.4 119.2 206.4 118.9 Q204.5 119.2 204.8 121" fill="none" stroke="#4a4a66" stroke-width="1.3" stroke-linecap="round"/>
<path d="M201.8 121.6 Q203.8 125.2 206 126.2 Q209 126.6 209.2 122.6 Q209 119.8 206.4 119.4" fill="none" stroke="#4a4a66" stroke-width="2.8" stroke-linecap="round"/>
<!-- rectangle -->
<rect x="224.6" y="115.2" width="15.8" height="15.6" rx="1" fill="url(#pg)" stroke="#4a4a66" stroke-width="1.3"/>
<path d="M245.2 126.8 V132.2 H238.1 Z" fill="#000"/>
<!-- ellipse btn -->
<rect x="251.5" y="107.5" width="27" height="27" fill="#ddecfc" stroke="#99c8f4" stroke-width="1"/>
<circle cx="264.7" cy="122.8" r="7.7" fill="url(#pg)" stroke="#4a4a66" stroke-width="1.4"/>
<path d="M277 127 V132.2 H270.3 Z" fill="#000"/>
<!-- polygon -->
<path d="M288.5 122.5 L292.7 115.3 H302.3 L306.5 122.5 L302.3 129.7 H292.7 Z" fill="url(#pg)" stroke="#4a4a66" stroke-width="1.3"/>
<path d="M309.3 127 V132.2 H302.5 Z" fill="#000"/>
<g fill="none" stroke="#44445e" stroke-width="1.5" stroke-linecap="square">
<path d="M337.3 111.4 V112.8"/>
<path d="M328.4 116.6 V113.9 H345.6 V116.6"/>
<path d="M332.6 117.4 H342 L337.6 120.6"/>
<path d="M328.4 122.6 H345.6"/>
<path d="M337.5 120.6 V127.6 Q337.5 128.7 336.2 128.7 H335"/>
</g>
<path d="M349.2 126.8 V132.9 H342.8 Z" fill="#000"/>
<!-- dimension -->
<path d="M371 126.6 L383 115.3" stroke="#1e1e3a" stroke-width="1.5"/>
<path d="M367.4 125.2 L372.7 130.2 M381.2 111.8 L386.6 116.7" stroke="#1e1e3a" stroke-width="1.7"/>
<path d="M370.2 127.4 L371.2 122.2 L375.4 126.2 Z M383.9 114.4 L378.8 115.5 L382.8 119.5 Z" fill="#1e1e3a"/>
<path d="M389.2 127 V132.9 H382.3 Z" fill="#000"/>
<!-- connector -->
<path d="M407 117.5 L412 125" stroke="#6a74a8" stroke-width="1.1"/>
<rect x="403.5" y="111" width="7" height="7" fill="url(#org)" stroke="#4a4a80" stroke-width="0.9"/>
<rect x="408.3" y="124.6" width="6.6" height="6.6" fill="url(#org)" stroke="#4a4a80" stroke-width="0.9"/>
<path d="M421.8 127 V132.9 H414.6 Z" fill="#000"/>
<!-- drop shadow -->
<rect x="442.5" y="117" width="14.5" height="13.5" rx="1.5" fill="url(#shd)" opacity="0.85"/>
<rect x="440.2" y="114.5" width="13.6" height="12.2" rx="1.5" fill="url(#pg)" stroke="#4a4a6a" stroke-width="1.1"/>
<path d="M462.2 127 V132.9 H454.8 Z" fill="#000"/>
<!-- transparency -->
<path d="M480.5 110.8 L488.4 117.6 Q486 121 481.4 120.3 Q477.4 118.5 478 114.5 Q478.6 112.2 480.5 110.8 Z" fill="#ffffff" stroke="#4a4a70" stroke-width="1.1"/>
<path d="M478.4 116.6 L488 117.5 Q485.8 120.6 481.4 120 Q478.8 119.2 478.4 116.6 Z" fill="#26306a"/>
<path d="M480.6 120.5 L474 125.3" stroke="#6a6a8a" stroke-width="1.2"/>
<path d="M471.3 122.7 L476.4 127.9" stroke="#6a6a8a" stroke-width="1.2"/>
<path d="M486 121.2 H489.2 L492.6 132 H483 Z" fill="url(#trg)"/>
<!-- eyedropper -->
<rect x="510.4" y="120.8" width="11" height="10.8" fill="#fcd9b0"/>
<g fill="#f39a38"><rect x="510.4" y="120.8" width="2.7" height="2.7"/><rect x="515.9" y="120.8" width="2.7" height="2.7"/><rect x="513.1" y="123.5" width="2.7" height="2.7"/><rect x="518.6" y="123.5" width="2.8" height="2.7"/><rect x="515.9" y="126.2" width="2.7" height="2.7"/><rect x="513.1" y="128.9" width="2.7" height="2.7"/></g>
<g fill="#d8501a"><rect x="510.4" y="126.2" width="2.7" height="2.7"/><rect x="518.6" y="128.9" width="2.8" height="2.7"/><rect x="513.4" y="126.5" width="2" height="2" opacity="0.6"/></g>
<path d="M515.3 127 L522.8 119.2" stroke="#6a78b0" stroke-width="2.6" stroke-linecap="round"/>
<path d="M516.3 125.8 L521.8 120.2" stroke="#e07a20" stroke-width="0.9"/>
<path d="M521.6 114.6 L527.6 120.2" stroke="#262642" stroke-width="2.8" stroke-linecap="round"/>
<path d="M524.8 117 L529.6 112.2" stroke="#262642" stroke-width="4.4" stroke-linecap="round"/>
<path d="M533.3 127 V132.9 H526.7 Z" fill="#000"/>
<!-- interactive fill -->
<path d="M552.5 111.8 L558.4 117.6 L552.5 123.4 L546.6 117.6 Z" fill="#ffffff" stroke="#3a3a60" stroke-width="1.2"/>
<path d="M547.6 117.6 H557.4 L552.5 122.5 Z" fill="#f08000"/>
<circle cx="553" cy="117" r="0.9" fill="#3a5ccc"/>
<path d="M551 110.5 L554.5 114 M554.5 110.5 L551.5 113.5" stroke="#2e2e4a" stroke-width="1"/>
<path d="M555.8 122.2 H558.3 L561.7 132.3 H553.4 Z" fill="url(#ofg)"/><rect x="553.4" y="131.3" width="8" height="1" fill="#f08a00"/>
<path d="M565.9 126.8 V133.2 H559.4 Z" fill="#000"/>
<!-- smart fill -->
<path d="M581 111.8 L586.9 117.6 L581 123.4 L575.1 117.6 Z" fill="#ffffff" stroke="#3a3a60" stroke-width="1.2"/>
<path d="M576.1 117.6 H585.9 L581 122.5 Z" fill="#f08000"/>
<path d="M579.5 110.5 L583 114 M583 110.5 L580 113.5" stroke="#2e2e4a" stroke-width="1"/>
<rect x="584.4" y="124.5" width="10" height="7" rx="1" fill="none" stroke="#4a4a70" stroke-width="1"/>
<rect x="587.1" y="121.7" width="10" height="7.3" rx="1" fill="#ffffff" stroke="#4a4a70" stroke-width="1"/>
<path d="M587.6 122.2 H590 V125.8 H596.6 V128.5 H587.6 Z" fill="#f07800"/>
<!-- outline pen -->
<path d="M623.2 111.5 H627.8 L631 121.5 L628.2 128 H623 L620 121.5 Z" fill="#f0f0f6" stroke="#5a5a80" stroke-width="1.1"/>
<path d="M625.5 113 V121" stroke="#5a5a80" stroke-width="0.9"/>
<circle cx="625.5" cy="121" r="1" fill="#4a4a70"/>
<rect x="620.4" y="129.6" width="11.3" height="2.6" fill="#1a1a30"/>
<path d="M638.7 126.5 V132.8 H631.7 Z" fill="#000"/>
<!-- object properties -->
<rect x="652.7" y="110.4" width="14.8" height="14.8" fill="#ffffff" stroke="#6a6a80" stroke-width="1"/>
<rect x="652.2" y="109.9" width="15.8" height="3" fill="#6e6e88"/>
<g fill="#b4b4c8"><rect x="661" y="115.6" width="4.5" height="1.2"/><rect x="661" y="118.6" width="4.5" height="1.2"/><rect x="661" y="121.6" width="4.5" height="1.2"/></g>
<path d="M653.6 117.2 L659.2 123.3 L653.1 130.3 L647.5 124.6 Z" fill="#ffffff" stroke="#3a3a60" stroke-width="1.1"/>
<path d="M648.6 124.5 L658.3 124 L653.1 129.3 Z" fill="#f08a00"/>
<path d="M654.5 116 L661 124" stroke="#2e2e4a" stroke-width="1.1"/>
<!-- color sliders -->
<rect x="680.9" y="113" width="9.1" height="3.4" fill="#505478"/>
<rect x="691.2" y="112" width="2.6" height="5.6" rx="0.5" fill="#c8c8d4" stroke="#4a4a62" stroke-width="0.9"/>
<rect x="695.2" y="113" width="5.7" height="3.4" fill="#ff0a0a"/>
<rect x="681" y="119.2" width="3" height="3.6" fill="#1a1a30"/>
<rect x="685.6" y="118.2" width="2.6" height="5.6" rx="0.5" fill="#c8c8d4" stroke="#4a4a62" stroke-width="0.9"/>
<rect x="689.2" y="119.2" width="11.8" height="3.6" fill="#10e810"/>
<rect x="681" y="126" width="7" height="3.4" fill="#1e1e36"/>
<rect x="689.4" y="125" width="2.6" height="5.6" rx="0.5" fill="#c8c8d4" stroke="#4a4a62" stroke-width="0.9"/>
<rect x="693" y="126" width="8" height="3.4" fill="#2a6af8"/>
<!-- tab plus -->
<path d="M77 142.5 V151.5 M72.5 147 H81.5" stroke="#b4b4b4" stroke-width="1.6"/>
<!-- ruler corner icon -->
<g fill="#151515">
<rect x="7" y="162" width="1.2" height="1.2"/><rect x="5.6" y="163.8" width="1.2" height="1.2"/><rect x="9.6" y="163.8" width="1.2" height="1.2"/><rect x="13" y="163.8" width="1.2" height="1.2"/><rect x="7" y="166.5" width="1.2" height="1.2"/><rect x="7" y="169.8" width="1.2" height="1.2"/>
<path d="M8.5 165 L12 168.2" stroke="#151515" stroke-width="1.1"/>
<path d="M13.8 170 L10.8 169.6 L13.4 166.9 Z"/>
</g>
</svg>
<div class="t" style="left:19.5px;top:3px;font-size:12px;line-height:14px;letter-spacing:-0.6px">CorelDRAW X7 (64-Bit) - 未命名 -1</div>
<div class="t mi" style="left:8px">文件(<u>F</u>)</div>
<div class="t mi" style="left:60px">编辑(<u>E</u>)</div>
<div class="t mi" style="left:112px">视图(<u>V</u>)</div>
<div class="t mi" style="left:164px">布局(<u>L</u>)</div>
<div class="t mi" style="left:216px">对象(<u>C</u>)</div>
<div class="t mi" style="left:270px">效果(<u>C</u>)</div>
<div class="t mi" style="left:324px">位图(<u>B</u>)</div>
<div class="t mi" style="left:377px">文本(<u>X</u>)</div>
<div class="t mi" style="left:429px">表格(<u>T</u>)</div>
<div class="t mi" style="left:482px">工具(<u>O</u>)</div>
<div class="t mi" style="left:537px">窗口(<u>W</u>)</div>
<div class="t mi" style="left:593px">帮助(<u>H</u>)</div>
<div class="t" style="left:413.5px;top:47px;font-size:12.5px;line-height:14px;letter-spacing:-0.6px">125%</div>
<div class="t" style="left:616px;top:46px;font-size:11px;line-height:14px">贴齐(<u>T</u>)</div>
<div class="t" style="left:3px;top:140px;font-size:11px;line-height:14px">未命名 -1</div>
<div class="t" style="left:13px;top:79px;font-size:11.2px;line-height:14px;letter-spacing:-0.3px">A4</div>
<div class="t" style="left:178px;top:72px;font-size:11.6px;line-height:13px">297.0 mm</div>
<div class="t" style="left:178px;top:86px;font-size:11.6px;line-height:13px">210.0 mm</div>
<div class="t" style="left:396px;top:79px;font-size:11.6px;line-height:13px">单位:</div>
<div class="t" style="left:426px;top:79px;font-size:11.6px;line-height:13px">毫米</div>
<div class="t" style="left:540px;top:81px;font-size:12px;line-height:13px">.1 mm</div>
<div class="t" style="left:639px;top:74px;font-size:12px;line-height:13px">5.0 mm</div>
<div class="t" style="left:639px;top:88px;font-size:12px;line-height:13px">5.0 mm</div>
<div class="a" style="left:272px;top:152px;width:213px;height:37px;border:1px solid #767676;border-radius:2px;background:linear-gradient(#ffffff,#e4e5f0);box-shadow:1px 1px 1px rgba(0,0,0,0.08)"></div>
<div class="t" style="left:278px;top:154px;font-size:11px;line-height:14px;color:#4c4c4c;font-weight:bold">椭圆形工具 (F7)</div>
<div class="t" style="left:278px;top:171px;font-size:11px;line-height:14px;color:#4c4c4c">在绘图窗口拖动工具绘制圆形和椭圆形。</div>
</body></html>
